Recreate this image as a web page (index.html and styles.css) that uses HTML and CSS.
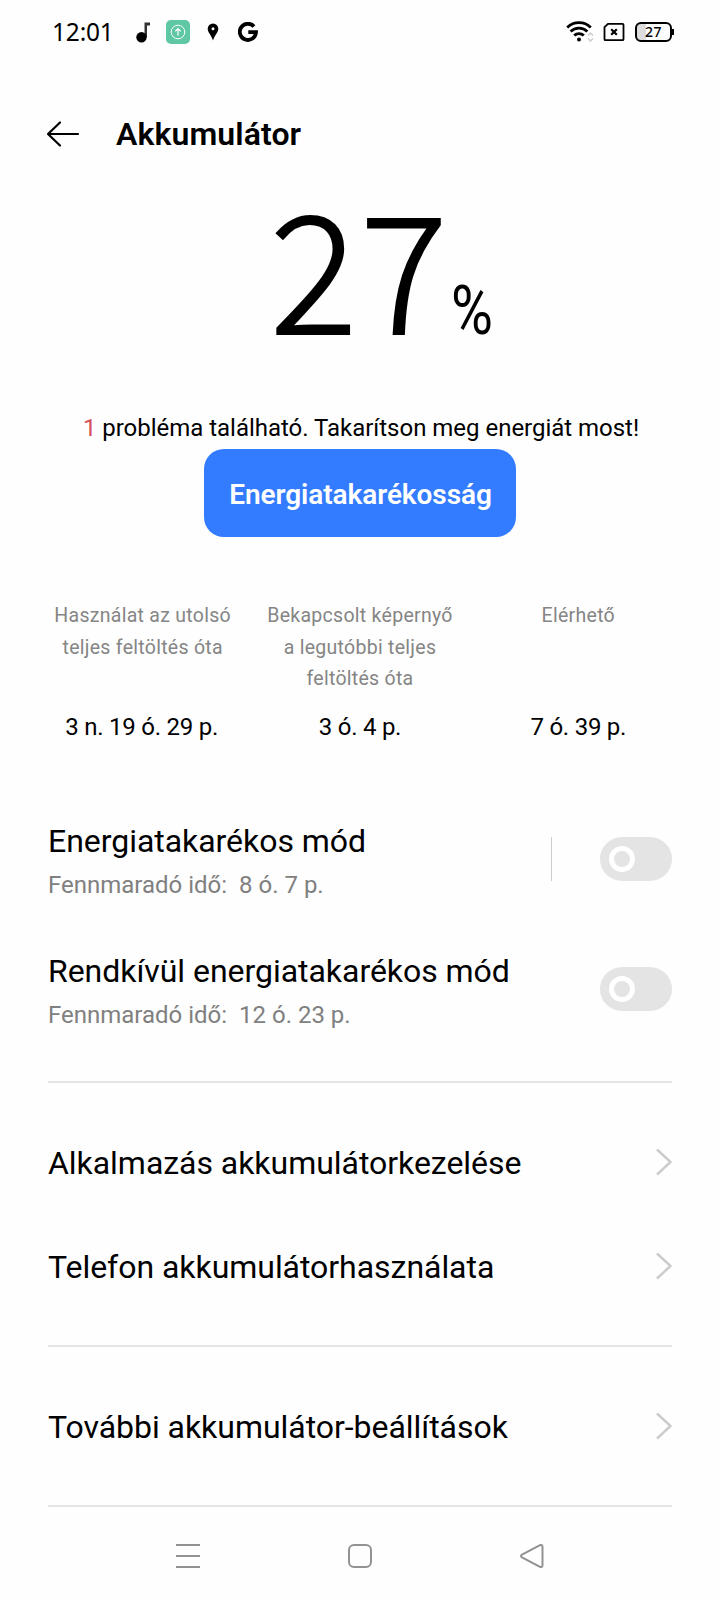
FILE: index.html
```html
<!DOCTYPE html>
<html lang="hu">
<head>
    <meta charset="UTF-8">
    <meta name="viewport" content="width=device-width, initial-scale=1.0">
    <title>Akkumulátor</title>
    <link rel="stylesheet" href="styles.css">
</head>
<body>
    <div class="status-bar">
        <span class="clock">12:01</span>
        <svg class="music" width="16" height="24" viewBox="0 0 16 24">
            <path d="M9.500 17V2.500h5.500v3h-3V17z" fill="#333"/>
            <circle cx="6.500" cy="17.200" r="5.200"/>
        </svg>
        <svg class="app" width="24" height="24" viewBox="0 0 24 24" fill="none" stroke="#fff">
            <rect width="24" height="24" rx="5" fill="#5fc7a4" stroke="none"/>
            <circle cx="12" cy="12" r="6.800"/>
            <path d="M12 15.500V9M9.300 11.300L12 8.700l2.700 2.600" stroke-width="1.200"/>
        </svg>
        <svg class="pin" width="12" height="18" viewBox="0 0 12 18">
            <path fill-rule="evenodd" d="M6 .5A5.300 5.300 0 0 0 .7 5.800C.7 9.500 4.500 12.500 6 17.500 7.500 12.500 11.300 9.500 11.300 5.800A5.300 5.300 0 0 0 6 .5zM6 4.200a1.500 1.500 0 1 1 0 3A1.500 1.500 0 0 1 6 4.200z"/>
        </svg>
        <svg class="google" width="20" height="20" viewBox="0 0 20 20" fill="none" stroke="#000" stroke-width="3.800">
            <path d="M16 4.500A8.100 8.100 0 1 0 18 10.200H10.300"/>
        </svg>
        <svg class="wifi" width="28" height="22" viewBox="0 0 28 22" fill="none" stroke="#000" stroke-width="2.800">
            <path d="M1.200 6.400a17 17 0 0 1 23.600 0M4.600 10.600a12 12 0 0 1 16.800 0M8.200 14.600a7 7 0 0 1 9.600 0"/>
            <circle cx="13" cy="18.600" r="2" fill="#000" stroke="none"/>
            <path d="M22 14.500l2.500-2.500 2.500 2.500M22 17.500l2.500 2.500 2.500-2.500" stroke="#ccc" stroke-width="1.500"/>
        </svg>
        <svg class="sim" width="22" height="20" viewBox="0 0 22 20" fill="none" stroke="#000">
            <path d="M5 1.800H19.500Q20.500 1.800 20.500 2.800V17.200Q20.500 18.200 19.500 18.200H2.500Q1.500 18.200 1.500 17.200V5.200z" stroke-width="1.800"/>
            <path d="M8.200 7.200l5.600 5.600M13.800 7.200l-5.600 5.600" stroke-width="2.200"/>
        </svg>
        <div class="battery">27</div>
    </div>

    <div class="header">
        <svg width="34" height="28" viewBox="0 0 34 28" fill="none" stroke="#000" stroke-width="2.200" stroke-linecap="round" stroke-linejoin="round">
            <path d="M32 14H2M14 2.500L2 14l12 11.500"/>
        </svg>
        <h1>Akkumulátor</h1>
    </div>

    <div class="level"><span class="number">27</span><span class="percent">%</span></div>

    <p class="message"><span class="count">1</span> probléma található. Takarítson meg energiát most!</p>
    <button class="save">Energiatakarékosság</button>

    <div class="stats">
        <div class="stat">
            <div class="label">Használat az utolsó<br>teljes feltöltés óta</div>
            <div class="value">3 n. 19 ó. 29 p.</div>
        </div>
        <div class="stat">
            <div class="label">Bekapcsolt képernyő<br>a legutóbbi teljes<br>feltöltés óta</div>
            <div class="value">3 ó. 4 p.</div>
        </div>
        <div class="stat">
            <div class="label">Elérhető</div>
            <div class="value">7 ó. 39 p.</div>
        </div>
    </div>

    <div class="group modes">
        <div class="mode">
            <div class="text">
                <div class="title">Energiatakarékos mód</div>
                <div class="remaining">Fennmaradó idő:&nbsp; 8 ó. 7 p.</div>
            </div>
            <div class="separator"></div>
            <div class="toggle"></div>
        </div>
        <div class="mode">
            <div class="text">
                <div class="title">Rendkívül energiatakarékos mód</div>
                <div class="remaining">Fennmaradó idő:&nbsp; 12 ó. 23 p.</div>
            </div>
            <div class="toggle"></div>
        </div>
    </div>

    <div class="group links">
        <div class="link">
            <span class="title">Alkalmazás akkumulátorkezelése</span>
            <svg class="chevron" width="16" height="28" viewBox="0 0 16 28"><path d="M1 1.500L14.500 14 1 26.500"/></svg>
        </div>
        <div class="link">
            <span class="title">Telefon akkumulátorhasználata</span>
            <svg class="chevron" width="16" height="28" viewBox="0 0 16 28"><path d="M1 1.500L14.500 14 1 26.500"/></svg>
        </div>
    </div>

    <div class="group links last">
        <div class="link">
            <span class="title">További akkumulátor-beállítások</span>
            <svg class="chevron" width="16" height="28" viewBox="0 0 16 28"><path d="M1 1.500L14.500 14 1 26.500"/></svg>
        </div>
    </div>

    <div class="nav">
        <svg width="24" height="24" viewBox="0 0 24 24"><path d="M0 1h24M0 12h24M0 23h24"/></svg>
        <svg width="24" height="24" viewBox="0 0 24 24"><rect x="1" y="1" width="22" height="22" rx="5"/></svg>
        <svg width="24" height="24" viewBox="0 0 24 24"><path d="M2 10.700L19.500 1.300Q22.500 0 22.500 3V21Q22.500 24 19.500 22.700L2 13.300Q0 12 2 10.700z"/></svg>
    </div>
</body>
</html>
```

FILE: styles.css
```css
*, *::before, *::after {
    box-sizing: border-box;
}
body {
    font-family: Roboto, sans-serif;
    width: 720px;
    height: 1600px;
    margin: 0;
    background: #fefefe;
    color: #000;
    overflow: hidden;
}
svg {
    display: block;
    flex: none;
}
.status-bar {
    display: flex;
    align-items: center;
    height: 64px;
    padding: 0 46px 0 52px;
}
.clock {
    width: 83px;
    font-family: "Noto Sans", sans-serif;
    font-size: 24.500px;
    line-height: 32px;
    letter-spacing: -0.200px;
}
.music {
    margin-right: 15px;
}
.app {
    margin-right: 17px;
}
.pin {
    margin-right: 19px;
}
.wifi {
    margin-left: auto;
    margin-right: 9px;
}
.sim {
    margin-right: 10px;
}
.battery {
    position: relative;
    width: 37px;
    height: 20px;
    margin-right: 2px;
    border: 2px solid #000;
    border-radius: 6px;
    background: linear-gradient(to right, #ddd 27%, #fefefe 27%);
    font-family: "Noto Sans", sans-serif;
    font-size: 14px;
    font-weight: 500;
    line-height: 16px;
    letter-spacing: 0.500px;
    text-align: center;
}
.battery::after {
    content: "";
    position: absolute;
    top: 5px;
    right: -4px;
    width: 2px;
    height: 6px;
    background: #000;
}
.header {
    display: flex;
    align-items: center;
    gap: 36px;
    height: 140px;
    padding: 0 46px;
}
h1 {
    margin: 0;
    font-size: 32px;
    font-weight: 600;
    line-height: 40px;
    letter-spacing: 0.100px;
}
.level {
    display: flex;
    align-items: baseline;
    height: 207px;
    margin-top: -11px;
    padding-left: 270px;
    line-height: 140px;
}
.number {
    width: 181px;
    font-family: "Noto Sans CJK SC", sans-serif;
    font-size: 163px;
    font-weight: 300;
    letter-spacing: 3px;
    -webkit-text-stroke: 2px #000;
}
.percent {
    width: 40px;
    margin-bottom: 1px;
    font-size: 69px;
    transform: scaleX(0.830);
    transform-origin: left;
}
.message {
    margin: 0;
    height: 49px;
    padding: 12px 0 0 2px;
    font-size: 24px;
    line-height: 32px;
    letter-spacing: -0.020px;
    text-align: center;
    white-space: nowrap;
}
.count {
    color: #d7505a;
}
.save {
    display: block;
    width: 312px;
    height: 88px;
    margin: 0 auto;
    padding: 2px 0 0 1px;
    border: none;
    border-radius: 20px;
    background: #347cff;
    color: #fff;
    font-family: inherit;
    font-size: 28px;
    font-weight: 600;
    letter-spacing: -0.080px;
}
.stats {
    display: grid;
    grid-template-columns: repeat(3, 1fr);
    height: 257px;
    padding: 63px 34px 0;
    text-align: center;
}
.label {
    height: 111px;
    color: #858585;
    font-size: 19.500px;
    line-height: 31.500px;
    letter-spacing: 0.280px;
}
.value {
    font-size: 24px;
    line-height: 32px;
    letter-spacing: -0.250px;
}
.stat:first-child .value {
    margin-left: -2px;
}
.stat:last-child {
    padding-left: 2px;
}
.group {
    margin: 0 48px;
    border-bottom: 2px solid #e4e4e4;
}
.modes {
    height: 289px;
}
.mode {
    display: flex;
    align-items: center;
    height: 130px;
}
.text {
    flex: 1;
}
.title {
    font-size: 32px;
    line-height: 44px;
    letter-spacing: -0.040px;
    white-space: nowrap;
}
.remaining {
    height: 31px;
    color: #808080;
    font-size: 24px;
    line-height: 32px;
    margin-top: 6px;
}
.separator {
    width: 1px;
    height: 44px;
    margin-right: 48px;
    background: #ccc;
}
.toggle {
    width: 72px;
    height: 44px;
    padding: 9px;
    border-radius: 22px;
    background: #e4e4e4;
}
.toggle::before {
    content: "";
    display: block;
    width: 26px;
    height: 26px;
    border: 5px solid #fff;
    border-radius: 50%;
}
.links {
    height: 264px;
    padding-top: 28px;
}
.last {
    height: 160px;
}
.link {
    display: flex;
    align-items: center;
    justify-content: space-between;
    height: 104px;
}
.chevron {
    margin-bottom: 2px;
    fill: none;
    stroke: #ccc;
    stroke-width: 2.500;
    stroke-linejoin: round;
}
.nav {
    display: flex;
    justify-content: space-between;
    padding: 37px 176px 0;
}
.nav svg {
    fill: none;
    stroke: #929292;
    stroke-width: 2;
}
```
